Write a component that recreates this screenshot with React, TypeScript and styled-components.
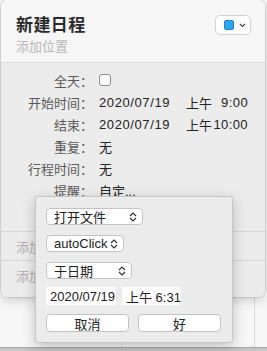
import styled, { createGlobalStyle } from 'styled-components';

const GlobalStyle = createGlobalStyle`
  html, body {
    margin: 0;
    padding: 0;
  }
  body {
    font-family: "Liberation Sans", "Noto Sans CJK SC", sans-serif;
    background: #f6f6f6;
  }
`;

const fields = [
  { label: '开始时间：', date: '2020/07/19', half: '上午', time: '9:00' },
  { label: '结束：', date: '2020/07/19', half: '上午', time: '10:00' },
];

const Chevrons = () => (
  <svg width="8" height="10" viewBox="0 0 8 10">
    <path d="M1 4 L4 1 L7 4 M1 6 L4 9 L7 6" fill="none" stroke="#333" strokeWidth="1.2" />
  </svg>
);

const App = () => {
  return (
    <Stage>
      <GlobalStyle />
      <Calendar>
        <Cell />
        <Cell />
        <Cell $last />
      </Calendar>
      <BottomBar />

      <Panel>
        <Header>
          <div>
            <Title>新建日程</Title>
            <Location>添加位置</Location>
          </div>
          <ColorButton>
            <Swatch />
            <svg width="7" height="5" viewBox="0 0 7 5">
              <path d="M1 1 L3.5 3.5 L6 1" fill="none" stroke="#444" strokeWidth="1.2" />
            </svg>
          </ColorButton>
        </Header>
        <Body>
          <Fields>
            <Label>全天：</Label>
            <Value>
              <Checkbox />
            </Value>
            {fields.map((f) => (
              <>
                <Label key={f.label}>{f.label}</Label>
                <Value>
                  <DateText>{f.date}</DateText>
                  <span>{f.half}</span>
                  <TimeText>{f.time}</TimeText>
                </Value>
              </>
            ))}
            <Label>重复：</Label>
            <Value>无</Value>
            <Label>行程时间：</Label>
            <Value>无</Value>
            <Label>提醒：</Label>
            <Value>自定...</Value>
          </Fields>
          <Footer>
            <AddRow>添加受邀人</AddRow>
            <AddRow>添加备注</AddRow>
          </Footer>
        </Body>
      </Panel>

      <AlertPopover>
        <Select $width={97}>
          <span>打开文件</span>
          <Chevrons />
        </Select>
        <Select $width={78}>
          <span>autoClick</span>
          <Chevrons />
        </Select>
        <Select $width={86}>
          <span>于日期</span>
          <Chevrons />
        </Select>
        <DateRow>
          <Field $width={70}>2020/07/19</Field>
          <Field $width={58}>上午 6:31</Field>
        </DateRow>
        <ButtonRow>
          <Button>取消</Button>
          <Button>好</Button>
        </ButtonRow>
      </AlertPopover>
    </Stage>
  );
};

const Stage = styled.div`
  position: relative;
  width: 267px;
  height: 351px;
  overflow: hidden;
  background: #f7f7f7;
`;

const Calendar = styled.div`
  display: grid;
  grid-template-columns: 122px 133px 1fr;
  height: 347px;
`;

const Cell = styled.div<{ $last?: boolean }>`
  border-right: ${(p) => (p.$last ? 'none' : '1px solid #dadada')};
`;

const BottomBar = styled.div`
  height: 4px;
  background: #c4c4c4;
  border-top: 1px solid #a9a9a9;
`;

const Panel = styled.div`
  position: absolute;
  left: 1px;
  top: 0;
  width: 264px;
  height: 297px;
  display: flex;
  flex-direction: column;
  border-radius: 6px;
  overflow: hidden;
  box-shadow: 0 0 0 0.5px rgba(0, 0, 0, 0.18), 0 3px 12px rgba(0, 0, 0, 0.18);
`;

const Header = styled.div`
  box-sizing: border-box;
  height: 63px;
  padding: 13px 14px 0 15px;
  display: flex;
  justify-content: space-between;
  align-items: flex-start;
  background: #f6f6f6;
  border-bottom: 1px solid #d9d9d9;
`;

const Title = styled.div`
  font-family: "Noto Sans CJK SC", sans-serif;
  font-size: 17px;
  line-height: 22px;
  font-weight: 600;
  letter-spacing: 0.4px;
  color: #2a2a2a;
`;

const Location = styled.div`
  margin-top: 2px;
  font-family: "Noto Sans CJK SC", sans-serif;
  font-size: 13px;
  line-height: 18px;
  color: #b8b8b8;
`;

const ColorButton = styled.div`
  box-sizing: border-box;
  margin-top: 2px;
  width: 36px;
  height: 20px;
  display: flex;
  align-items: center;
  gap: 5px;
  padding-left: 8px;
  background: #ffffff;
  border: 1px solid #d2d2d2;
  border-radius: 5px;
`;

const Swatch = styled.div`
  box-sizing: border-box;
  width: 10px;
  height: 10px;
  background: #2ba6f2;
  border: 1px solid #1c84c8;
  border-radius: 2px;
`;

const Body = styled.div`
  flex: 1;
  display: flex;
  flex-direction: column;
  background: #ececec;
`;

const Fields = styled.div`
  display: grid;
  grid-template-columns: 84px 1fr;
  column-gap: 14px;
  grid-auto-rows: 22px;
  align-items: center;
  padding-top: 6px;
  font-family: "Liberation Sans", "Noto Sans CJK SC", sans-serif;
  font-size: 13px;
`;

const Label = styled.div`
  text-align: right;
  color: #5a5a5a;
  white-space: nowrap;
  margin-right: -8px;
`;

const Value = styled.div`
  display: flex;
  align-items: center;
  color: #222222;
  white-space: nowrap;
`;

const Checkbox = styled.div`
  box-sizing: border-box;
  width: 12px;
  height: 12px;
  background: #ffffff;
  border: 1px solid #8e8e8e;
  border-radius: 3px;
`;

const DateText = styled.span`
  width: 87px;
  letter-spacing: 0.6px;
`;

const TimeText = styled.span`
  width: 36px;
  text-align: right;
  letter-spacing: 0.4px;
`;

const Footer = styled.div`
  margin-top: auto;
  padding-bottom: 8px;
`;

const AddRow = styled.div`
  box-sizing: border-box;
  height: 29px;
  padding-left: 15px;
  display: flex;
  align-items: center;
  border-top: 1px solid #d6d6d6;
  font-family: "Noto Sans CJK SC", sans-serif;
  font-size: 13px;
  color: #b0b0b0;
  white-space: nowrap;
`;

const AlertPopover = styled.div`
  position: absolute;
  left: 35px;
  top: 196px;
  box-sizing: border-box;
  width: 198px;
  height: 147px;
  padding: 11px 10px 0 10px;
  display: flex;
  flex-direction: column;
  gap: 10px;
  background: #ececec;
  border: 1px solid #c6c6c6;
  border-radius: 3px;
  box-shadow: 0 4px 14px rgba(0, 0, 0, 0.22);
  font-family: "Liberation Sans", "Noto Sans CJK SC", sans-serif;
  font-size: 13px;
  color: #222222;
`;

const Select = styled.div<{ $width: number }>`
  box-sizing: border-box;
  width: ${(p) => p.$width}px;
  height: 17px;
  padding: 0 5px 0 7px;
  display: flex;
  align-items: center;
  justify-content: space-between;
  background: #ffffff;
  border: 1px solid #c4c4c4;
  border-radius: 4px;
  white-space: nowrap;
`;

const DateRow = styled.div`
  display: flex;
  gap: 6px;
  margin-top: -2px;
`;

const Field = styled.div<{ $width: number }>`
  box-sizing: border-box;
  width: ${(p) => p.$width}px;
  height: 18px;
  padding-left: 4px;
  display: flex;
  align-items: center;
  background: #ffffff;
  white-space: nowrap;
`;

const ButtonRow = styled.div`
  display: flex;
  gap: 9px;
  margin-top: -1px;
`;

const Button = styled.div`
  box-sizing: border-box;
  width: 83px;
  height: 18px;
  display: flex;
  align-items: center;
  justify-content: center;
  background: #ffffff;
  border: 1px solid #c4c4c4;
  border-radius: 4px;
`;

export default App;
